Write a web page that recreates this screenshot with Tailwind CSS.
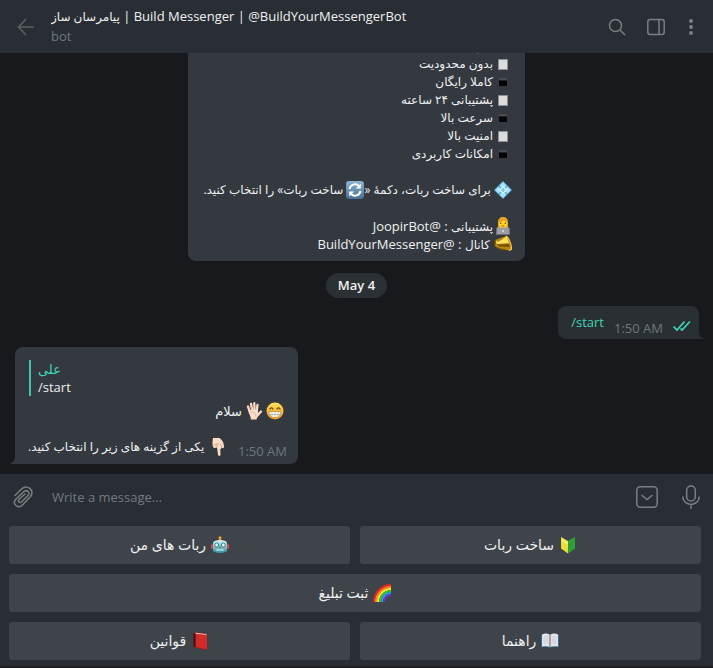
<!DOCTYPE html>
<html lang="en">

<head>
    <meta charset="UTF-8">
    <meta name="viewport" content="width=device-width, initial-scale=1.0">
    <title>Build Messenger</title>
    <script src="https://cdn.jsdelivr.net/npm/@tailwindcss/browser@4"></script>
</head>

<body class="flex h-screen flex-col overflow-hidden bg-[#18191d] font-['Open_Sans','DejaVu_Sans',sans-serif] text-[13px] leading-[18px] text-[#f0f1f2]">

    <!-- emoji sprites -->
    <svg class="h-0 w-0 shrink-0" aria-hidden="true">
        <defs>
            <linearGradient id="gold" x1="0" y1="0" x2="0" y2="1">
                <stop offset="0" stop-color="#ffe45a" />
                <stop offset="1" stop-color="#f29a1c" />
            </linearGradient>
            <linearGradient id="teal" x1="0" y1="0" x2="0" y2="1">
                <stop offset="0" stop-color="#d8f3f3" />
                <stop offset="1" stop-color="#2f8fa0" />
            </linearGradient>
            <linearGradient id="blue" x1="0" y1="0" x2="0" y2="1">
                <stop offset="0" stop-color="#8db4d3" />
                <stop offset="1" stop-color="#456f94" />
            </linearGradient>
        </defs>
        <symbol id="e-white" viewBox="0 0 18 18">
            <rect x="4" y="4" width="10" height="11" fill="#8d9092" />
            <rect x="5" y="5" width="8" height="9" fill="#dcdcdc" />
        </symbol>
        <symbol id="e-black" viewBox="0 0 18 18">
            <rect x="5" y="5" width="8" height="8" fill="#050505" />
            <rect x="5" y="5" width="8" height="2" fill="#4b4b4b" />
            <rect x="5" y="7" width="8" height="1" fill="#222" />
        </symbol>
        <symbol id="e-diamond" viewBox="0 0 18 18">
            <path d="M9 0l9 9-9 9-9-9z" fill="#4fa9dc" />
            <path d="M9 1l3.500 3.500L9 8 5.500 4.500zM4.500 5.500L8 9l-3.500 3.500L1 9zM13.500 5.500L17 9l-3.500 3.500L10 9zM9 10l3.500 3.500L9 17l-3.500-3.500z" fill="#a9e2fa" />
            <path d="M9 5l4 4-4 4-4-4z" fill="#e4f8ff" />
            <path d="M9 6.500L11.500 9 9 11.500 6.500 9z" fill="#84c9ee" />
        </symbol>
        <symbol id="e-cycle" viewBox="0 0 18 18">
            <rect width="18" height="18" rx="3" fill="url(#blue)" />
            <path d="M3.500 8a5.600 5.600 0 0 1 9.500-3M14.500 10a5.600 5.600 0 0 1-9.500 3" fill="none" stroke="#fff" stroke-width="2" />
            <path d="M14.800 2.500v5h-5zM3.200 15.500v-5h5z" fill="#fff" />
        </symbol>
        <symbol id="e-coder" viewBox="0 0 18 18">
            <path d="M2 17c0-4 2-5 7-5s7 1 7 5z" fill="#3b4a9c" />
            <path d="M4 11V5c0-3 2-5 5-5s5 2 5 5v6z" fill="#e8a21f" />
            <path d="M5 5c2 0 4-.5 5-2 .5 1.200 2 2 3 2v3c0 2-2 4-4 4S5 10 5 8z" fill="#ffd42e" />
            <path d="M6.700 5.500v1.500M11.300 5.500v1.500" stroke="#5b3b10" stroke-width="1" />
            <path d="M7.500 9h3" stroke="#b75a1b" stroke-width="1" />
            <rect x="2.500" y="10.500" width="13" height="7" rx=".5" fill="#9b9da2" />
            <path d="M8.300 14h1.400" stroke="#fff" stroke-width="1.300" />
            <path d="M2 17.500h14" stroke="#6d6f75" />
        </symbol>
        <symbol id="e-horn" viewBox="0 0 18 18">
            <path d="M3 10l1 4 5 1.500 1-3z" fill="#7c4e06" />
            <path d="M1 5l-.8 5L2 12l14 4 1.500-3-3-10L12 1z" fill="#b98412" />
            <path d="M1 5l3 2 8.500-5.500L15 8 3 9z" fill="#ffe05a" />
            <path d="M3 9.500l12-.5 1 3-11-.5z" fill="#7c5207" />
            <path d="M12 1c3 2 5.500 8 5.500 13l-2 1.500" fill="none" stroke="#f3cc49" stroke-width="1.200" />
            <path d="M1 5l-.3 5.500" stroke="#6b4305" stroke-width="1.500" />
        </symbol>
        <symbol id="e-grin" viewBox="0 0 18 18">
            <circle cx="9" cy="9" r="8.500" fill="url(#gold)" />
            <path d="M3.700 7.500c.7-2.200 2.800-2.200 3.500 0M10.800 7.500c.7-2.200 2.800-2.200 3.500 0" fill="none" stroke="#70400a" stroke-width="1.200" />
            <path d="M3 9.500h12c0 4-2.500 6-6 6s-6-2-6-6z" fill="#fff" stroke="#a9721c" stroke-width=".6" />
            <path d="M3.500 12.500h11M6 9.500v5M9 9.500v6M12 9.500v5" stroke="#9f9a90" stroke-width=".6" />
        </symbol>
        <symbol id="e-hand" viewBox="0 0 18 18">
            <path d="M3 4.500L5 11M6 1.800L7.300 9M9.300 1.200L9.500 9M12.500 3L11.700 9M16 9.500L12 14" fill="none" stroke="#fbdcc8" stroke-width="2.300" stroke-linecap="round" />
            <path d="M3.700 8h9.200l.6 4.500c-.5 2-1.500 3-2 5H6C5.500 14 4 12 3.700 8z" fill="#fbdcc8" />
            <path d="M5.500 10.500c3-.8 5 .5 5.500 4M6.300 7L5.800 4.500M8.300 6.500V3M10.700 6.500V4" fill="none" stroke="#d9a78d" stroke-width=".7" />
        </symbol>
        <symbol id="e-point" viewBox="0 0 18 18">
            <path d="M4 0h6.500c3 2 4.500 5 4.500 9 0 1.500-2 1.500-2.300.2L12 11l-.7-.3.2 6c0 1.600-2.400 1.600-2.500 0L8 9.500 5.500 10C4 10 3.300 8 3.500 4z" fill="#fbdcc8" />
            <path d="M8 9c0-2 1-3 2-3M12.700 9L11.500 6M4.500 7c2 .5 3.500-.5 4-2" fill="none" stroke="#c98f73" stroke-width=".7" />
        </symbol>
        <symbol id="e-robot" viewBox="0 0 18 18">
            <path d="M9 2v3" stroke="#d79b35" stroke-width="2" />
            <circle cx="9" cy="1.700" r="1.500" fill="#f4a72d" />
            <rect x="0" y="8" width="2" height="5" rx="1" fill="#d64a3e" />
            <rect x="16" y="8" width="2" height="5" rx="1" fill="#d64a3e" />
            <path d="M2 7c0-4 14-4 14 0v7c0 4-14 4-14 0z" fill="url(#teal)" />
            <circle cx="5.700" cy="9" r="2" fill="#dffcff" stroke="#218b9e" />
            <circle cx="12.300" cy="9" r="2" fill="#dffcff" stroke="#218b9e" />
            <path d="M9 10l1 2H8z" fill="#d9392e" />
            <path d="M5.500 14h7" stroke="#d9f3f5" stroke-width="1.600" stroke-dasharray="1.400 .5" />
        </symbol>
        <symbol id="e-leaf" viewBox="0 0 18 18">
            <path d="M2 1l7 4v12.500l-7-5z" fill="#e8df3c" />
            <path d="M16 1L9 5v12.500l7-5z" fill="#2fa638" />
            <path d="M3 3l6 3.500v2L3 5z" fill="#f6f07a" />
            <path d="M15 3v9.500L9 17V8z" fill="#27923a" opacity=".4" />
        </symbol>
        <symbol id="e-rainbow" viewBox="0 0 18 18">
            <g fill="none" stroke-width="2">
                <path d="M1 18A17 17 0 0 1 18 1" stroke="#e62420" />
                <path d="M3 18A15 15 0 0 1 18 3" stroke="#fb8b1e" />
                <path d="M5 18A13 13 0 0 1 18 5" stroke="#fbe92f" />
                <path d="M7 18A11 11 0 0 1 18 7" stroke="#35bd3b" />
                <path d="M9 18A9 9 0 0 1 18 9" stroke="#299fe5" />
                <path d="M11 18A7 7 0 0 1 18 11" stroke="#6f2fd0" />
            </g>
        </symbol>
        <symbol id="e-book" viewBox="0 0 18 18">
            <path d="M2.500 1.500L5 0l11 1.500v15L14 18 2.500 15z" fill="#8f1717" />
            <path d="M4.500 1.500L16 3v14.500L4.500 15z" fill="#d52b28" />
            <path d="M2.500 1.500l2 0V15l-2-.5z" fill="#3c1414" />
            <path d="M4.500 1.200L15.500 2.500" stroke="#e6dcd6" stroke-width=".9" />
        </symbol>
        <symbol id="e-open" viewBox="0 0 18 18">
            <path d="M0 3h18v12h-7l-2 1-2-1H0z" fill="#2f6c8c" />
            <path d="M1 2.500C4 1 7 1.500 9 3v12c-2-1-5-1-8-.5zM17 2.500C14 1 11 1.500 9 3v12c2-1 5-1 8-.5z" fill="#e4e4ea" />
            <path d="M9 3v12" stroke="#77777f" stroke-width="1.200" />
            <path d="M2.500 5h5M2.500 7h5M2.500 9h5M2.500 11h5M10.500 5h5M10.500 7h5M10.500 9h5M10.500 11h5" stroke="#bcbcc6" stroke-width=".6" />
        </symbol>
    </svg>

    <header class="flex h-[53px] shrink-0 items-center bg-[#282e33] pr-[9px] pl-[17px] text-[#7b7f82]">
        <button aria-label="Back" class="mr-4 text-[#5d6164]">
            <svg class="size-[18px]" viewBox="0 0 18 18" fill="none" stroke="currentColor" stroke-width="1.500"><path d="M17 9H2M9 1L1.500 9 9 17" /></svg>
        </button>
        <div class="min-w-0 flex-1 pb-[2px]">
            <h1 class="truncate leading-5 font-medium text-[#f0f1f2]"><span class="text-xs">پیامرسان ساز</span> | Build Messenger | @BuildYourMessengerBot</h1>
            <p class="leading-5 text-[#6f777d]">bot</p>
        </div>
        <div class="flex items-center gap-[21px]">
            <button aria-label="Search">
                <svg class="size-[18px]" viewBox="0 0 18 18" fill="none" stroke="currentColor" stroke-width="1.500"><circle cx="7.500" cy="7.500" r="6" /><path d="M12 12l5 5" /></svg>
            </button>
            <button aria-label="Toggle side panel">
                <svg class="size-[18px]" viewBox="0 0 18 18" fill="none" stroke="currentColor" stroke-width="1.500"><rect x=".8" y="1.500" width="16.400" height="15" rx="2.500" /><path d="M12 1.500v15" /></svg>
            </button>
            <button aria-label="More">
                <svg class="size-[18px]" viewBox="0 0 18 18" fill="currentColor"><circle cx="5" cy="3" r="2" /><circle cx="5" cy="9" r="2" /><circle cx="5" cy="15" r="2" /></svg>
            </button>
        </div>
    </header>

    <main class="flex min-h-0 flex-1 flex-col justify-end overflow-hidden px-[14px] pb-[10px]">
        <section dir="rtl" class="w-[337px] shrink-0 self-center rounded-lg bg-[#33393f] px-[13px] py-2">
            <p class="flex items-center gap-px text-xs leading-[18px]"><svg class="size-[18px]"><use href="#e-black" /></svg>بدون تبلیغ</p>
            <p class="flex items-center gap-px text-xs leading-[18px]"><svg class="size-[18px]"><use href="#e-white" /></svg>بدون محدودیت</p>
            <p class="flex items-center gap-px text-xs leading-[18px]"><svg class="size-[18px]"><use href="#e-black" /></svg>کاملا رایگان</p>
            <p class="flex items-center gap-px text-xs leading-[18px]"><svg class="size-[18px]"><use href="#e-white" /></svg>پشتیبانی ۲۴ ساعته</p>
            <p class="flex items-center gap-px text-xs leading-[18px]"><svg class="size-[18px]"><use href="#e-black" /></svg>سرعت بالا</p>
            <p class="flex items-center gap-px text-xs leading-[18px]"><svg class="size-[18px]"><use href="#e-white" /></svg>امنیت بالا</p>
            <p class="flex items-center gap-px text-xs leading-[18px]"><svg class="size-[18px]"><use href="#e-black" /></svg>امکانات کاربردی</p>
            <p class="my-[18px] text-xs leading-[18px] whitespace-nowrap"><svg class="inline size-[18px] align-top"><use href="#e-diamond" /></svg> برای ساخت ربات، دکمهٔ «<svg class="inline size-[18px] align-top"><use href="#e-cycle" /></svg> ساخت ربات» را انتخاب کنید.</p>
            <p class="flex items-center gap-px"><svg class="size-[18px]"><use href="#e-coder" /></svg><span><span class="text-xs">پشتیبانی</span> : @JoopirBot</span></p>
            <p class="flex items-center gap-1"><svg class="size-[18px]"><use href="#e-horn" /></svg><span><span class="text-xs">کانال</span> : @BuildYourMessenger</span></p>
        </section>

        <time class="mt-3 shrink-0 self-center rounded-full bg-[#2b3035] px-3 leading-[25px] font-semibold">May 4</time>

        <section class="relative mt-2 flex h-[33px] shrink-0 self-end rounded-t-lg rounded-bl-lg bg-[#2a2f33] px-2">
            <a href="#" class="pl-[5px] leading-[33px] text-[#3fd6b8]">/start</a>
            <time class="ml-[10px] self-end pb-[2px] text-[#6f777d]">1:50 AM</time>
            <svg class="mt-[14px] ml-[10px] h-3 w-[18px]" viewBox="0 0 18 12" fill="none" stroke="#3fd6b8" stroke-width="1.700"><path d="M.5 6.500L4 10 11.500 1.500M7.500 8.500L9 10 17 1.500" /></svg>
            <svg class="absolute bottom-0 left-full h-2 w-[6px]" viewBox="0 0 6 8" fill="#2a2f33"><path d="M0 0c0 4 2 7 6 8H0z" /></svg>
        </section>

        <section class="relative mt-2 ml-px w-[283px] shrink-0 self-start rounded-t-lg rounded-br-lg bg-[#33393f] pt-[13px] pr-[11px] pb-2 pl-[13px]">
            <svg class="absolute right-full bottom-0 h-2 w-[6px]" viewBox="0 0 6 8" fill="#33393f"><path d="M6 0c0 4-2 7-6 8h6z" /></svg>
            <blockquote class="ml-px border-l-2 border-[#3bc9b0] pl-[7px]">
                <p class="text-[#3fd6b8]">علی</p>
                <p>/start</p>
            </blockquote>
            <p dir="rtl" class="mt-[6px] flex items-center gap-[3px] pr-[3px] leading-[18px]">
                <svg class="size-[18px]"><use href="#e-grin" /></svg>
                <svg class="size-[18px]"><use href="#e-hand" /></svg>
                سلام
            </p>
            <div class="mt-[18px] flex items-center justify-between">
                <p dir="rtl" class="flex items-center gap-[5px] text-xs leading-[18px] whitespace-nowrap"><svg class="size-[18px]"><use href="#e-point" /></svg>یکی از گزینه های زیر را انتخاب کنید.</p>
                <time class="-mb-2 whitespace-nowrap text-[#6f777d]">1:50 AM</time>
            </div>
        </section>
    </main>

    <footer class="shrink-0 border-b-2 border-[#1e1f20] bg-[#282e33] pr-3 pb-[6px] pl-[9px]">
        <div class="flex h-[46px] items-center pr-px pl-1 text-[#7b7f82]">
            <button aria-label="Attach file">
                <svg class="size-[22px]" viewBox="0 0 22 22" fill="none" stroke="currentColor" stroke-width="1.500" stroke-linecap="round"><path d="M2 9.500L8.500 3C14-2 22 4 17.500 10.500L9 19.500C5 23-1 18 2.500 13.500L11 5.500c3.500-2.500 6.500 1.500 4 4L8.500 16c-2 1.500-4-.5-2.500-2.500L12 8" /></svg>
            </button>
            <input type="text" aria-label="Message" placeholder="Write a message..." class="ml-[17px] min-w-0 flex-1 bg-transparent outline-none placeholder:text-[#737a80]">
            <button aria-label="Bot keyboard">
                <svg class="size-[22px]" viewBox="0 0 22 22" fill="none" stroke="currentColor" stroke-width="1.500"><rect x=".8" y=".8" width="20.400" height="20.400" rx="3.500" /><path d="M5.500 9l5.500 4.500L16.500 9" /></svg>
            </button>
            <button aria-label="Record voice message" class="ml-6">
                <svg class="h-6 w-[18px]" viewBox="0 0 18 24" fill="none" stroke="currentColor" stroke-width="1.500"><rect x="4.700" y="1" width="8.600" height="15" rx="4.300" /><path d="M.8 11.500c0 10.500 16.400 10.500 16.400 0M9 19.500V24" /></svg>
            </button>
        </div>
        <div dir="rtl" class="mt-[6px] grid grid-cols-2 gap-[10px] text-sm leading-[38px] font-medium *:flex *:items-center *:justify-center *:gap-[5px] *:rounded-[3px] *:bg-[#3e444a]">
            <button><svg class="size-[18px]"><use href="#e-leaf" /></svg>ساخت ربات</button>
            <button><svg class="size-[18px]"><use href="#e-robot" /></svg>ربات های من</button>
            <button class="col-span-2"><svg class="size-[18px]"><use href="#e-rainbow" /></svg>ثبت تبلیغ</button>
            <button><svg class="size-[18px]"><use href="#e-open" /></svg>راهنما</button>
            <button><svg class="size-[18px]"><use href="#e-book" /></svg>قوانین</button>
        </div>
    </footer>
</body>

</html>
